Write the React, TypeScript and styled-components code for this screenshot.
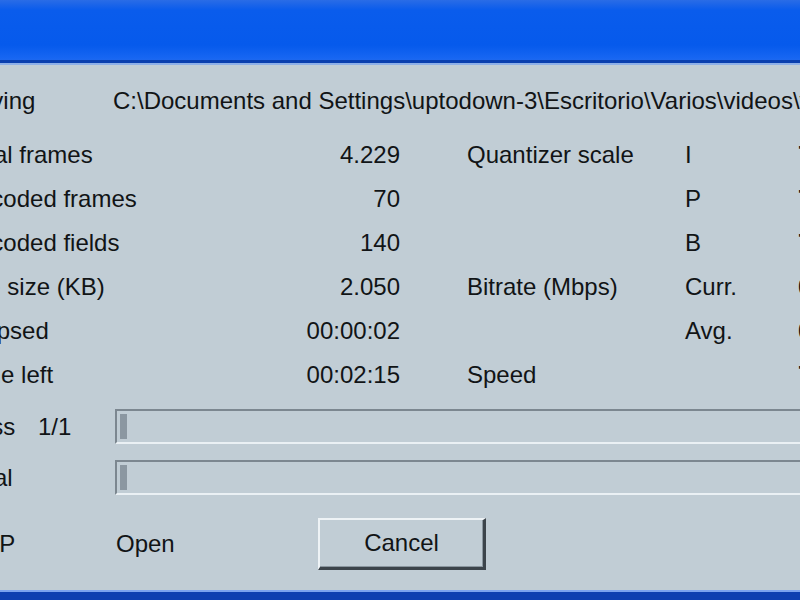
import { Fragment } from 'react'
import styled, { createGlobalStyle } from 'styled-components'

const GlobalStyle = createGlobalStyle`
  html, body {
    margin: 0;
    padding: 0;
    overflow: hidden;
    background: #c1cdd5;
  }
`

const Window = styled.div`
  width: 800px;
  height: 600px;
  display: flex;
  flex-direction: column;
  overflow: hidden;
  background: #c1cdd5;
  font-family: "Liberation Sans", Arial, sans-serif;
  font-size: 24px;
  color: #111416;
`

const TitleBar = styled.div`
  height: 60px;
  flex-shrink: 0;
  background: linear-gradient(to bottom, #2a6ce6 0px, #0a5cec 10px, #065aec 45px, #1766f2 58px, #1c68f0 60px);
  border-bottom: 3px solid #0a3fae;
  box-shadow: 0 2px 0 #8eb0e8;
`

const Body = styled.div`
  flex: 1;
  padding-top: 16px;
  margin-left: -38px;
`

const StatGrid = styled.div`
  display: grid;
  grid-template-columns: 151px 287px 67px 218px 112px 120px;
  grid-auto-rows: 44px;
  align-items: center;
  white-space: nowrap;
`

const PathRow = styled.div`
  display: grid;
  grid-template-columns: 151px 1fr;
  height: 44px;
  align-items: center;
  margin-bottom: 10px;
  white-space: nowrap;
`

const Label = styled.span`
  white-space: nowrap;
`

const Value = styled.span`
  text-align: right;
`

const Spacer = styled.span``

const Tail = styled.span`
  padding-left: 1px;
  white-space: nowrap;
  font-weight: bold;
`

const ProgressRow = styled.div<{ $top: number }>`
  display: grid;
  grid-template-columns: 153px 1fr;
  height: 35px;
  align-items: center;
  margin-top: ${p => p.$top}px;
`

const ProgressLabel = styled.div`
  display: flex;
  white-space: nowrap;
`

const PassName = styled.span`
  width: 76px;
`

const Bar = styled.div`
  height: 35px;
  width: 720px;
  box-sizing: border-box;
  border-top: 2px solid #7c8790;
  border-left: 2px solid #7c8790;
  border-bottom: 2px solid #eaf0f4;
  border-right: 2px solid #eaf0f4;
  padding: 3px;
  display: flex;
`

const Chunk = styled.div`
  width: 7px;
  background: #8b97a1;
`

const BottomRow = styled.div`
  display: grid;
  grid-template-columns: 154px 202px 168px;
  align-items: center;
  height: 52px;
  margin-top: 23px;
`

const CancelButton = styled.button`
  height: 52px;
  width: 168px;
  box-sizing: border-box;
  background: #c1cdd5;
  font-family: "Liberation Sans", Arial, sans-serif;
  font-size: 24px;
  color: #111416;
  border-top: 2px solid #eef3f6;
  border-left: 2px solid #eef3f6;
  border-right: 3px solid #3c444b;
  border-bottom: 3px solid #3c444b;
  box-shadow: inset -1px -1px 0 #8a969f;
  padding: 0 0 2px 0;
`

const BottomFrame = styled.div`
  height: 8px;
  flex-shrink: 0;
  background: #0d3fb0;
  border-top: 2px solid #7aa2ee;
`

const stats = [
  ['Total frames', '4.229', 'Quantizer scale', 'I', '7'],
  ['Encoded frames', '70', '', 'P', '7'],
  ['Encoded fields', '140', '', 'B', '7'],
  ['File size (KB)', '2.050', 'Bitrate (Mbps)', 'Curr.', '0'],
  ['Elapsed', '00:00:02', '', 'Avg.', '0'],
  ['Time left', '00:02:15', 'Speed', '', '7'],
]

function App() {
  return (
    <Window>
      <GlobalStyle />
      <TitleBar />
      <Body>
        <PathRow>
          <Label>Saving</Label>
          <Label>C:\Documents and Settings\uptodown-3\Escritorio\Varios\videos\video.mpg</Label>
        </PathRow>
        <StatGrid>
          {stats.map(([label, value, group, sub, rest]) => (
            <Fragment key={label}>
              <Label>{label}</Label>
              <Value>{value}</Value>
              <Spacer />
              <Label>{group}</Label>
              <Label>{sub}</Label>
              <Tail>{rest}</Tail>
            </Fragment>
          ))}
        </StatGrid>
        <ProgressRow $top={12}>
          <ProgressLabel>
            <PassName>Pass</PassName>
            <span>1/1</span>
          </ProgressLabel>
          <Bar><Chunk /></Bar>
        </ProgressRow>
        <ProgressRow $top={16}>
          <ProgressLabel>
            <PassName>Total</PassName>
          </ProgressLabel>
          <Bar><Chunk /></Bar>
        </ProgressRow>
        <BottomRow>
          <Label>GOP</Label>
          <Label>Open</Label>
          <CancelButton>Cancel</CancelButton>
        </BottomRow>
      </Body>
      <BottomFrame />
    </Window>
  )
}

export default App
